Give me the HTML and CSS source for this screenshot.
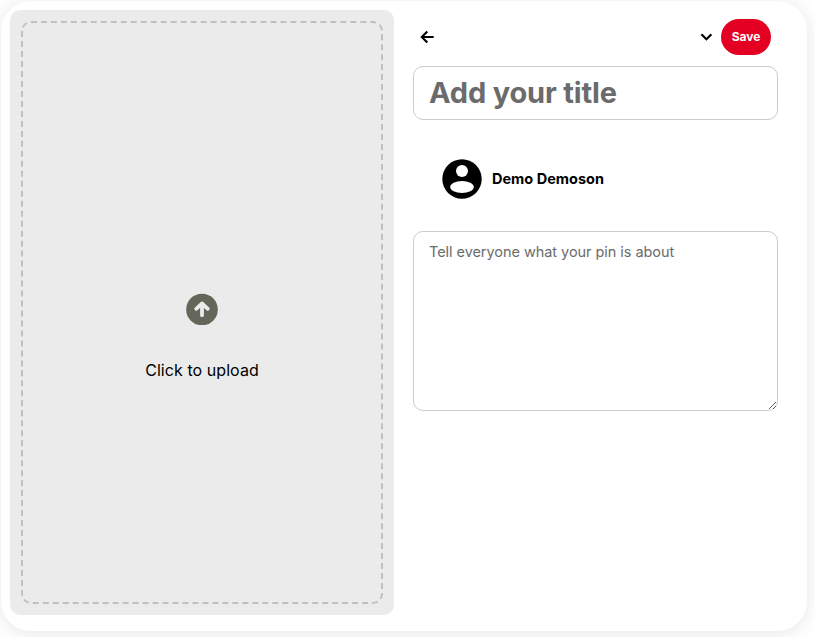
FILE: index.html
```html
<!DOCTYPE html>
<html lang="en">
<head>
<meta charset="utf-8">
<title>Create pin</title>
<link rel="stylesheet" href="styles.css">
</head>
<body>
<main class="card">
  <section class="upload-panel">
    <div class="dropzone">
      <svg class="upload-icon" viewBox="0 0 32 32">
        <circle cx="16" cy="16.5" r="15.8" fill="#65665a"/>
        <path d="M16 22.2V10.5M10.2 15.8l5.8-5.3 5.8 5.3" fill="none" stroke="#ebebeb" stroke-width="3.8" stroke-linecap="round" stroke-linejoin="round"/>
      </svg>
      <p class="upload-text">Click to upload</p>
    </div>
  </section>
  <section class="details">
    <header class="toolbar">
      <svg class="back-icon" viewBox="0 0 14 14">
        <path d="M13.7 7H2M7.3 1.5L1.8 7l5.5 5.5" fill="none" stroke="#000" stroke-width="2.1"/>
      </svg>
      <svg class="chevron-icon" viewBox="0 0 12 8">
        <path d="M1.4 1.3l5 5 5-5" fill="none" stroke="#000" stroke-width="2.1"/>
      </svg>
      <button class="save">Save</button>
    </header>
    <input class="title-input" type="text" placeholder="Add your title">
    <div class="user">
      <svg class="avatar" viewBox="0 0 40 40">
        <circle cx="20" cy="20" r="19.7"/>
        <circle cx="20" cy="12" r="6" fill="#fff"/>
        <ellipse cx="20" cy="28" rx="11.8" ry="6" fill="#fff"/>
      </svg>
      <span class="user-name">Demo Demoson</span>
    </div>
    <textarea class="description" placeholder="Tell everyone what your pin is about"></textarea>
  </section>
</main>
</body>
</html>
```
FILE: styles.css
```css
* {
  box-sizing: border-box;
}

body {
  margin: 0;
  padding: 1px;
  height: 637px;
  overflow: hidden;
  background: #fff;
  font-family: Inter, "Liberation Sans", sans-serif;
}

.card {
  display: flex;
  width: 806px;
  height: 630px;
  padding: 9px;
  border-radius: 30px;
  background: #fff;
  box-shadow: 0 2px 20px rgba(0, 0, 0, 0.1);
}

.upload-panel {
  width: 384px;
  height: 605px;
  padding: 11px;
  border-radius: 10px;
  background: #ebebeb;
}

.dropzone {
  display: flex;
  flex-direction: column;
  align-items: center;
  height: 583px;
  padding-top: 270px;
  border: 2px dashed #c0c0c0;
  border-radius: 10px;
}

.upload-icon {
  width: 32px;
  height: 32px;
}

.upload-text {
  margin: 35px 0 0;
  font-size: 16px;
  line-height: 20px;
  letter-spacing: 0.06px;
}

.details {
  width: 365px;
  margin-left: 19px;
  padding-top: 9px;
}

.toolbar {
  display: flex;
  align-items: center;
  height: 36px;
  padding: 0 7px 0 7px;
}

.back-icon {
  width: 14px;
  height: 14px;
}

.chevron-icon {
  width: 12px;
  height: 8px;
  margin: 0 9px 0 auto;
}

.save {
  width: 50px;
  height: 36px;
  padding: 0 0 1px;
  border: 0;
  border-radius: 18px;
  background: #e30022;
  color: #fff;
  font: 700 12px Inter, sans-serif;
}

.title-input,
.description {
  display: block;
  width: 365px;
  border: 1px solid #ccc;
  border-radius: 10px;
  background: #fff;
  outline: 0;
}

.title-input {
  height: 54px;
  margin-top: 11px;
  padding: 0 15px 1px;
  font: 700 29px Inter, sans-serif;
  letter-spacing: -0.17px;
}

.title-input::placeholder,
.description::placeholder {
  color: #6b6b6b;
}

.user {
  display: flex;
  align-items: center;
  gap: 10px;
  height: 40px;
  margin: 39px 0 32px 29px;
}

.avatar {
  width: 40px;
  height: 40px;
}

.user-name {
  padding-bottom: 2px;
  font-size: 14.5px;
  font-weight: 700;
}

.description {
  height: 180px;
  padding: 10px 15px;
  resize: vertical;
  font: 400 14.5px/20px Inter, sans-serif;
  letter-spacing: -0.05px;
}
```
